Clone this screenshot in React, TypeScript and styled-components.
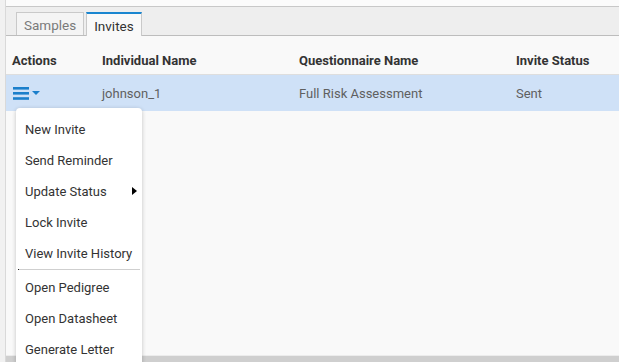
import React, { FC } from 'react';
import styled, { createGlobalStyle } from 'styled-components';

const GlobalStyle = createGlobalStyle`
    html, body {
        margin: 0;
        padding: 0;
        overflow: hidden;
        font-family: Roboto, "Liberation Sans", Arial, sans-serif;
    }
`;

interface InviteRow {
    individual: string,
    questionnaire: string,
    status: string
}

const rows: InviteRow[] = [
    { individual: 'johnson_1', questionnaire: 'Full Risk Assessment', status: 'Sent' }
];

const menuGroups: { label: string, submenu?: boolean }[][] = [
    [
        { label: 'New Invite' },
        { label: 'Send Reminder' },
        { label: 'Update Status', submenu: true },
        { label: 'Lock Invite' },
        { label: 'View Invite History' }
    ],
    [
        { label: 'Open Pedigree' },
        { label: 'Open Datasheet' },
        { label: 'Generate Letter' }
    ]
];

const tabs = ['Samples', 'Invites'];

const ActionsIcon: FC = () => (
    <IconButton>
        <svg width="28" height="13" viewBox="0 0 28 13">
            <rect x="0" y="0" width="16" height="2.6" fill="#1b7fcb" />
            <rect x="0" y="5" width="16" height="2.6" fill="#1b7fcb" />
            <rect x="0" y="10.2" width="16" height="2.6" fill="#1b7fcb" />
            <path d="M19 4 L27 4 L23 8 Z" fill="#1b7fcb" />
        </svg>
    </IconButton>
);

const App: FC = () => {
    return (
        <Page>
            <GlobalStyle />
            <Panel>
                <TopStrip />
                <TabBar>
                    {tabs.map((t) => (
                        <Tab key={t} active={t === 'Invites'}>{t}</Tab>
                    ))}
                </TabBar>
                <Body>
                    <HeaderRow>
                        <HeaderCell>Actions</HeaderCell>
                        <HeaderCell>Individual Name</HeaderCell>
                        <HeaderCell>Questionnaire Name</HeaderCell>
                        <HeaderCell>Invite Status</HeaderCell>
                    </HeaderRow>
                    {rows.map((r) => (
                        <DataRow key={r.individual} selected>
                            <Cell><ActionsIcon /></Cell>
                            <Cell>{r.individual}</Cell>
                            <Cell>{r.questionnaire}</Cell>
                            <Cell>{r.status}</Cell>
                        </DataRow>
                    ))}
                    <Menu>
                        {menuGroups.map((group, gi) => (
                            <React.Fragment key={gi}>
                                {gi > 0 && <Separator />}
                                {group.map((item) => (
                                    <MenuItem key={item.label}>
                                        {item.label}
                                        {item.submenu && <SubArrow />}
                                    </MenuItem>
                                ))}
                            </React.Fragment>
                        ))}
                    </Menu>
                </Body>
                <ScrollBar />
            </Panel>
        </Page>
    );
}

const Page = styled.div`
    height: 100vh;
    display: flex;
    background: #f1f1f1;
    padding-left: 5px;
    box-sizing: border-box;
    overflow: hidden;
`;

const Panel = styled.div`
    flex: 1;
    display: flex;
    flex-direction: column;
    border-left: 1px solid #d9d9d9;
    background: #f9f9f9;
    min-width: 0;
`;

const TopStrip = styled.div`
    height: 6px;
    background: #fbfbfb;
    border-bottom: 1px solid #c8c8c8;
`;

const TabBar = styled.div`
    height: 28px;
    background: #eeeeee;
    border-bottom: 1px solid #bdbdbd;
    display: flex;
    align-items: flex-end;
    padding-left: 10px;
    gap: 2px;
`;

const Tab = styled.div<{ active?: boolean }>`
    padding: 1px 7px 0 7px;
    box-sizing: border-box;
    display: flex;
    align-items: center;
    font-size: 13.5px;
    color: ${(p) => (p.active ? '#333' : '#7a7a7a')};
    background: ${(p) => (p.active ? '#f9f9f9' : '#f4f4f4')};
    border: 1px solid #c9c9c9;
    border-top: ${(p) => (p.active ? '2px solid #1a86d0' : '1px solid #c9c9c9')};
    border-bottom: none;
    margin-bottom: ${(p) => (p.active ? '-1px' : '0')};
    height: ${(p) => (p.active ? '24px' : '23px')};
`;

const Body = styled.div`
    flex: 1;
    position: relative;
`;

const gridCols = `
    display: grid;
    grid-template-columns: 90px 197px 217px 1fr;
    padding-left: 6px;
`;

const HeaderRow = styled.div`
    ${gridCols}
    height: 39px;
    align-items: end;
    padding-bottom: 6px;
    box-sizing: border-box;
    border-bottom: 1px solid #dedede;
`;

const HeaderCell = styled.div`
    font-size: 13px;
    font-weight: 700;
    line-height: 15px;
    color: #333;
`;

const DataRow = styled.div<{ selected?: boolean }>`
    ${gridCols}
    height: 36px;
    align-items: center;
    background: ${(p) => (p.selected ? '#cfe1f7' : 'transparent')};
`;

const Cell = styled.div`
    font-size: 13px;
    color: #5f5f5f;
    display: flex;
    align-items: center;
`;

const IconButton = styled.div`
    display: flex;
    margin-left: 1px;
    cursor: pointer;
`;

const Menu = styled.div`
    position: absolute;
    z-index: 2;
    left: 10px;
    top: 72px;
    width: 126px;
    padding-top: 6px;
    background: #fff;
    border-radius: 4px;
    box-shadow: 0 1px 4px rgba(0, 0, 0, 0.22);
`;

const MenuItem = styled.div`
    height: 31px;
    display: flex;
    align-items: center;
    padding-left: 9px;
    font-size: 13px;
    color: #333;
    position: relative;
    white-space: nowrap;
`;

const SubArrow = styled.span`
    position: absolute;
    right: 5px;
    top: 11px;
    width: 0;
    height: 0;
    border-left: 5px solid #000;
    border-top: 4.5px solid transparent;
    border-bottom: 4.5px solid transparent;
`;

const Separator = styled.div`
    height: 1px;
    margin: 0 2px 2px 2px;
    background: #cfcfcf;
    border-left: 1px solid #222;
`;

const ScrollBar = styled.div`
    height: 6px;
    background: #cfcfcf;
    border-top: 1px solid #ececec;
`;

export default App;
